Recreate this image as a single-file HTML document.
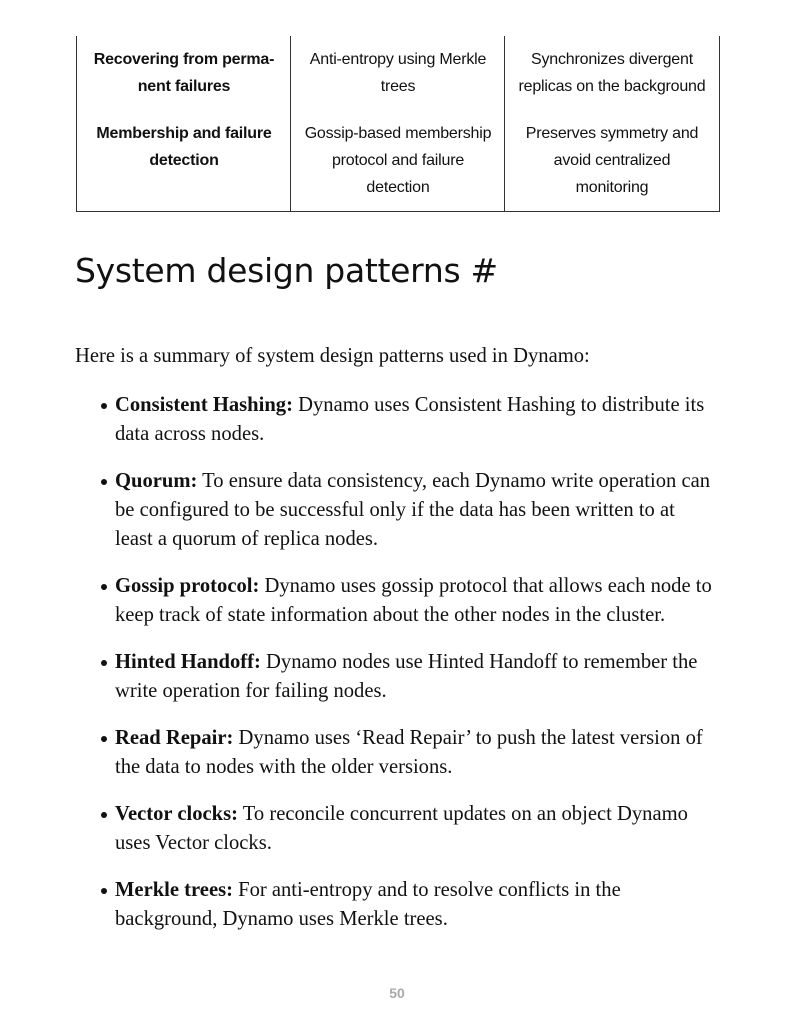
<!DOCTYPE html>
<html><head><style>
body{margin:0;width:794px;height:1027px;background:#fff;position:relative;overflow:hidden;color:#111}
.t{position:absolute;left:76px;top:36px;width:642px;height:175px;border-left:1px solid #333;border-right:1px solid #333;border-bottom:1px solid #333}
.v{position:absolute;top:0;bottom:0;width:1px;background:#333}
.c{position:absolute;width:214px;text-align:center;font:16px/27px "Liberation Sans",Arial,sans-serif;color:#111;letter-spacing:-0.2px}
.b{font-weight:bold}
h1{position:absolute;left:75px;top:251px;margin:0;font:33px "DejaVu Sans","Liberation Sans",sans-serif;font-weight:normal;letter-spacing:-0.3px;color:#111}
.p{position:absolute;left:75px;top:342px;font:20.6px/29px "Liberation Serif",serif;}
ul{position:absolute;left:115px;top:391px;margin:0;padding:0;width:640px;list-style:none;font:20.6px/29px "Liberation Serif",serif}
li{margin-bottom:18px;position:relative}
li:before{content:"";position:absolute;left:-14px;top:12px;width:6px;height:6px;border-radius:50%;background:#111}
.n{position:absolute;left:0;width:794px;top:985px;text-align:center;font:bold 14px "Liberation Sans",sans-serif;color:#aaa}
</style></head><body>
<div class="t">
<div class="v" style="left:213px"></div><div class="v" style="left:427px"></div>
<div class="c b" style="left:0;top:10px">Recovering from perma-<br>nent failures</div>
<div class="c" style="left:214px;top:10px">Anti-entropy using Merkle<br>trees</div>
<div class="c" style="left:428px;top:10px">Synchronizes divergent<br>replicas on the background</div>
<div class="c b" style="left:0;top:84px">Membership and failure<br>detection</div>
<div class="c" style="left:214px;top:84px">Gossip-based membership<br>protocol and failure<br>detection</div>
<div class="c" style="left:428px;top:84px">Preserves symmetry and<br>avoid centralized<br>monitoring</div>
</div>
<h1>System design patterns #</h1>
<div class="p">Here is a summary of system design patterns used in Dynamo:</div>
<ul>
<li><b>Consistent Hashing:</b> Dynamo uses Consistent Hashing to distribute its<br>data across nodes.</li>
<li><b>Quorum:</b> To ensure data consistency, each Dynamo write operation can<br>be configured to be successful only if the data has been written to at<br>least a quorum of replica nodes.</li>
<li><b>Gossip protocol:</b> Dynamo uses gossip protocol that allows each node to<br>keep track of state information about the other nodes in the cluster.</li>
<li><b>Hinted Handoff:</b> Dynamo nodes use Hinted Handoff to remember the<br>write operation for failing nodes.</li>
<li><b>Read Repair:</b> Dynamo uses ‘Read Repair’ to push the latest version of<br>the data to nodes with the older versions.</li>
<li><b>Vector clocks:</b> To reconcile concurrent updates on an object Dynamo<br>uses Vector clocks.</li>
<li><b>Merkle trees:</b> For anti-entropy and to resolve conflicts in the<br>background, Dynamo uses Merkle trees.</li>
</ul>
<div class="n">50</div>
</body></html>
